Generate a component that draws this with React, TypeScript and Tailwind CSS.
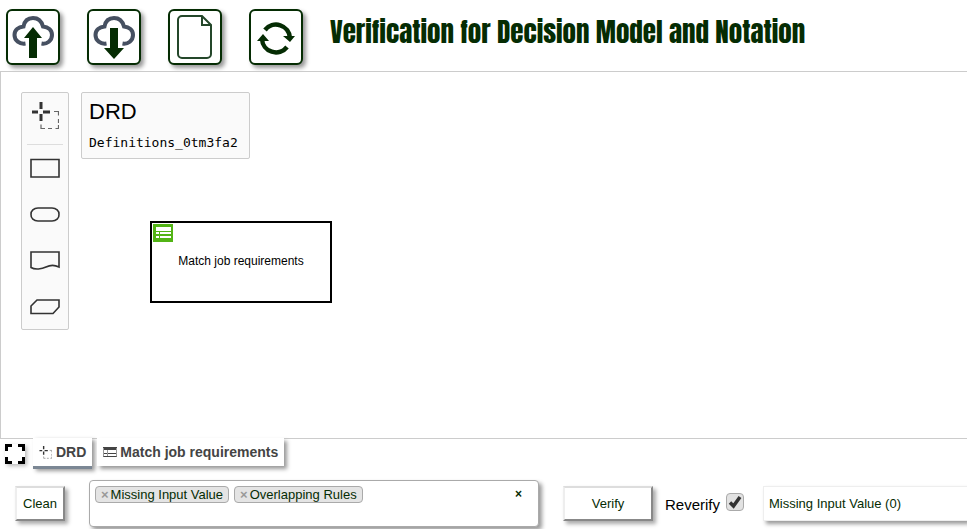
import { useState, type ReactNode } from "react";

function ToolButton({ label, children }: { label: string; children: ReactNode }) {
  return (
    <button
      type="button"
      aria-label={label}
      className="flex h-14 w-[54px] items-center justify-center rounded-md border-2 border-[#052c03] bg-white shadow-[3px_3px_4px_#999]"
    >
      {children}
    </button>
  );
}

function Cloud({ arrow }: { arrow: string }) {
  return (
    <svg width="50" height="52" viewBox="0 0 50 52">
      <path
        d="M17.500 32.500c-6 1-11-3-11-8.500c0-5 4-8 9-8.500C16.500 10 20 7 25 7s8.500 3 10 8.500c5 .5 9 3.500 9 8.500c0 5.500-5 9.500-10.500 8.500"
        fill="none"
        stroke="#465061"
        strokeWidth="4"
      />
      <path d={arrow} fill="#052c03" />
    </svg>
  );
}

function PaletteTool({ label, path }: { label: string; path: string }) {
  return (
    <button type="button" aria-label={label} className="flex h-[46px] w-full items-center justify-center">
      <svg width="32" height="24" viewBox="0 0 32 24" fill="none" stroke="#333" strokeWidth="1.600">
        <path d={path} />
      </svg>
    </button>
  );
}

function LassoIcon({ size }: { size: number }) {
  return (
    <svg width={size} height={size} viewBox="0 0 28 28" fill="none" stroke="#333">
      <path d="M10 0v7M10 12v7M1 10h6M12 10h7" strokeWidth="3" />
      <path
        d="M23 9.500h4.500v4M27.500 17v4M27.500 23v3.500h-3M21 26.500h-4M14 26.500h-4v-4"
        stroke="#666"
        strokeWidth="1.200"
      />
    </svg>
  );
}

function TableIcon() {
  return (
    <svg width="14" height="10" viewBox="0 0 14 10" fill="none" stroke="#444">
      <path d="M0 1.500h14" strokeWidth="3" />
      <path d="M0 9.500h14M0 6.500h14" />
      <path d="M.5 1v8.500M13.500 1v8.500M4.500 3v6" stroke="#999" />
    </svg>
  );
}

function Tag({ text }: { text: string }) {
  return (
    <li className="flex h-[17px] items-center gap-[2px] rounded border border-[#aaa] bg-[#e4e4e4] px-[5px] text-[13px] text-[#052c03]">
      <button type="button" aria-label={"Remove " + text} className="font-bold text-[#999]">
        ×
      </button>
      {text}
    </li>
  );
}

const raised =
  "h-[35px] shrink-0 border-2 border-t-[#ddd] border-l-[#eee] border-r-[#888] border-b-[#888] bg-white text-[13px] text-[#052c03] shadow-[3px_3px_4px_#aaa]";

export default function App() {
  const [reverify, setReverify] = useState(true);
  return (
    <div className="flex h-screen flex-col overflow-hidden bg-white font-['Liberation_Sans',Arial,sans-serif] text-black">
      <header className="flex h-[71px] shrink-0 items-center gap-[27px] pt-[3px] pl-[6px]">
        <ToolButton label="Upload">
          <Cloud arrow="M25 16l9 11h-5v20h-8V27h-5z" />
        </ToolButton>
        <ToolButton label="Download">
          <Cloud arrow="M21 17h8v20h6L25 48 15 37h6z" />
        </ToolButton>
        <ToolButton label="New">
          <svg width="50" height="52" viewBox="0 0 50 52" fill="none" stroke="#24472a" strokeWidth="2">
            <path d="M12 5h20l9 9v29a4 4 0 0 1-4 4H12a4 4 0 0 1-4-4V9a4 4 0 0 1 4-4z" />
            <path d="M32 5v9h9" />
          </svg>
        </ToolButton>
        <ToolButton label="Refresh">
          <svg width="50" height="52" viewBox="0 0 50 52" fill="none" stroke="#052c03" strokeWidth="4.500">
            <path d="M14 19a14 14 0 0 1 25 8M36 36a14 14 0 0 1-25-8" />
            <path d="M32 25h12l-5 6zM6 30h12l-6-7z" fill="#052c03" stroke="none" />
          </svg>
        </ToolButton>
        <h1 className="pb-[9px] font-['Impact','Anton','Oswald','Roboto_Condensed','Open_Sans_Condensed','Liberation_Sans_Narrow','Liberation_Sans',sans-serif] text-[27px] font-normal whitespace-nowrap text-[#052c03]">
          Verification for Decision Model and Notation
        </h1>
      </header>

      <main className="relative flex min-h-0 flex-1 items-start gap-3 border-y border-l border-[#ccc] pt-5 pl-5">
        <nav aria-label="Palette" className="flex w-12 flex-col rounded-xs border border-[#ccc] bg-[#fafafa]">
          <button type="button" aria-label="Lasso" className="mx-[5px] flex h-[52px] items-start justify-center border-b border-[#ddd] pt-[9px]">
            <LassoIcon size={28} />
          </button>
          <PaletteTool label="Decision" path="M2 3.500h28v17.500H2z" />
          <PaletteTool label="Input data" path="M9 6h14a7 6 0 0 1 7 6.500a7 6 0 0 1-7 6.500H9a7 6 0 0 1-7-6.500a7 6 0 0 1 7-6.500z" />
          <PaletteTool label="Knowledge source" path="M2 19.500V4h28v15c-4-2-9-2-13 0s-11 3-15 .5z" />
          <PaletteTool label="Knowledge model" path="M8 6h22v7l-6 6.500H2V12z" />
        </nav>
        <section className="h-[67px] w-[169px] rounded-xs border border-[#ccc] bg-[#fafafa] px-[7px] pt-[5px]">
          <h2 className="text-[22px] leading-7">DRD</h2>
          <p className="mt-[7px] font-['DejaVu_Sans_Mono',monospace] text-[13px] leading-5">Definitions_0tm3fa2</p>
        </section>
        <div className="absolute top-[149px] left-[149px] flex h-[82px] w-[182px] items-center justify-center border-2 border-black bg-white pb-[2px] text-xs">
          <svg className="absolute top-px left-px" width="20" height="18" viewBox="0 0 20 18">
            <path d="M0 0h20v18H0z" fill="#52b415" />
            <path d="M3 3h15v4H3zM3 8h3v2H3zM7 8h11v2H7zM3 12h3v2H3zM7 12h11v2H7z" fill="#fff" />
          </svg>
          Match job requirements
        </div>
      </main>

      <div className="relative z-10 -mt-px flex h-8 shrink-0 items-start gap-[5px] pl-[5px] text-sm font-bold text-[#444]">
        <button type="button" aria-label="Full screen" className="mt-[6px] mr-[3px] shadow-[2px_2px_4px_#bbb]">
          <svg className="block" width="20" height="20" viewBox="0 0 20 20" fill="none" stroke="#000" strokeWidth="3">
            <path d="M1.500 7V1.500H7M13 1.500h5.500V7M18.500 13v5.500H13M7 18.500H1.500V13" />
          </svg>
        </button>
        <button type="button" className="flex h-[31px] items-center gap-1 border-b-3 border-[#7b8794] bg-white px-[6px] shadow-[3px_2px_4px_#999]">
          <LassoIcon size={13} />
          DRD
        </button>
        <button type="button" className="flex h-7 items-center gap-[3px] bg-white px-[6px] shadow-[3px_3px_4px_#999]">
          <TableIcon />
          Match job requirements
        </button>
      </div>

      <footer className="flex h-[59px] shrink-0 items-start pt-[10px] pl-[15px]">
        <button type="button" className={raised + " mt-[6px] w-[50px]"}>Clean</button>
        <div className="ml-6 flex h-[47px] w-[450px] shrink-0 items-start rounded border border-[#aaa] bg-white pt-[5px] pr-4 pl-[5px] shadow-[3px_3px_4px_#999]">
          <ul className="flex flex-1 gap-[5px]">
            <Tag text="Missing Input Value" />
            <Tag text="Overlapping Rules" />
          </ul>
          <button type="button" aria-label="Clear all" className="text-xs font-bold text-[#052c03]">×</button>
        </div>
        <button type="button" className={raised + " mt-[6px] ml-6 w-[90px]"}>Verify</button>
        <label className="mt-[13px] ml-3 flex shrink-0 items-start gap-[6px] text-[15px] leading-6">
          Reverify
          <span className="relative flex size-[18px]">
            <input
              type="checkbox"
              checked={reverify}
              onChange={(e) => setReverify(e.target.checked)}
              className="size-[18px] appearance-none rounded-sm border border-[#aaa] bg-[#e2e2e2]"
            />
            {reverify && (
              <svg className="pointer-events-none absolute inset-0" width="18" height="18" viewBox="0 0 18 18" fill="none" stroke="#333" strokeWidth="3.500">
                <path d="M4 9.500l3.500 3.500L14 4" />
              </svg>
            )}
          </span>
        </label>
        <div className="mt-[6px] ml-[19px] flex h-[35px] min-w-0 flex-1 items-center border border-r-0 border-[#eee] bg-white pl-[5px] text-[13px] whitespace-nowrap text-[#052c03] shadow-[3px_3px_4px_#999]">
          Missing Input Value (0)
        </div>
      </footer>
    </div>
  );
}
